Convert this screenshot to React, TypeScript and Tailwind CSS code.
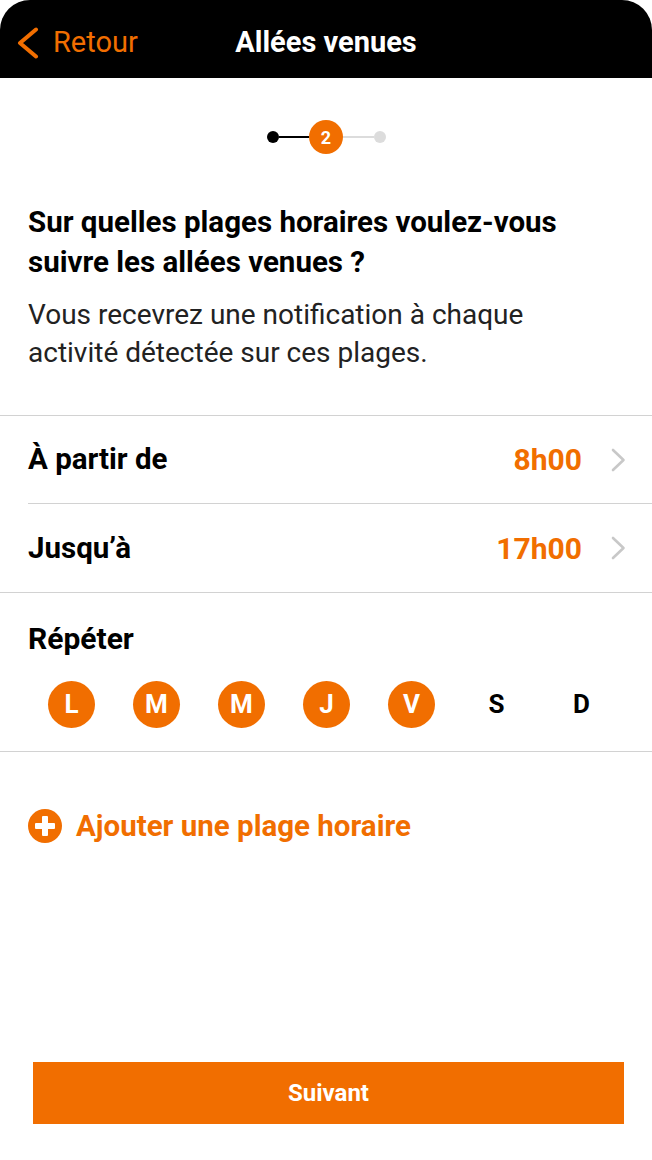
const days = [
  { label: 'L', on: true },
  { label: 'M', on: true },
  { label: 'M', on: true },
  { label: 'J', on: true },
  { label: 'V', on: true },
  { label: 'S', on: false },
  { label: 'D', on: false },
];

const TimeRow = ({ label, value, inset }: { label: string; value: string; inset?: boolean }) => (
  <div className={`flex h-[88px] items-center pr-[26px] ${inset ? 'ml-7 border-b border-[#d2d2d2]' : 'pl-7'}`}>
    <span className="flex-1 text-[29.5px] font-bold text-black">{label}</span>
    <span className="text-[30px] font-bold text-[#f16e00]">{value}</span>
    <svg className="ml-[29px]" width="15" height="24" viewBox="0 0 15 24">
      <polyline points="2,2 12.5,12 2,22" fill="none" stroke="#c8c8c8" strokeWidth="2.6" strokeLinecap="round" strokeLinejoin="round" />
    </svg>
  </div>
);

export default function App() {
  return (
    <div className="flex min-h-[1160px] w-[652px] flex-col bg-white" style={{ fontFamily: 'Roboto, "Liberation Sans", sans-serif' }}>
      {/* Header */}
      <div className="grid h-[78px] grid-cols-[1fr_auto_1fr] items-center rounded-t-[30px] bg-black pt-[8px]">
        <div className="flex items-center pl-[16px] text-[#f16e00]">
          <svg width="24" height="32" viewBox="0 0 24 32">
            <polyline points="20,2.5 4,16 20,29.5" fill="none" stroke="#f16e00" strokeWidth="4" strokeLinecap="round" strokeLinejoin="round" />
          </svg>
          <span className="ml-[13px] text-[29px]">Retour</span>
        </div>
        <div className="text-[29px] font-bold text-white">Allées venues</div>
        <div />
      </div>

      {/* Stepper */}
      <div className="mt-[42px] flex items-center justify-center pl-[1px]">
        <div className="h-3 w-3 rounded-full bg-black" />
        <div className="h-[2px] w-[30px] bg-black" />
        <div className="flex h-[34px] w-[34px] items-center justify-center rounded-full bg-[#f16e00] text-[18px] font-bold text-white">2</div>
        <div className="h-[2px] w-[31px] bg-[#dcdcdc]" />
        <div className="h-3 w-3 rounded-full bg-[#dcdcdc]" />
      </div>

      {/* Question */}
      <div className="px-7">
        <h1 className="mt-[48px] pr-[40px] text-[29.5px] font-bold leading-[40px] text-black">
          Sur quelles plages horaires voulez-vous suivre les allées venues ?
        </h1>
        <p className="mt-[14px] pr-6 text-[28px] leading-[38px] text-[#222]">
          Vous recevrez une notification à chaque activité détectée sur ces plages.
        </p>
      </div>

      {/* Time ranges */}
      <div className="mt-[43px] border-t border-[#d2d2d2]">
        <TimeRow label="À partir de" value="8h00" inset />
        <TimeRow label="Jusqu’à" value="17h00" />
      </div>

      {/* Repeat */}
      <div className="border-y border-[#d2d2d2] pb-[23px] pt-[30px]">
        <div className="px-7 text-[30px] font-bold leading-[32px] text-black">Répéter</div>
        <div className="mt-[26px] grid grid-cols-7 pl-[29px] pr-[28px]">
          {days.map((d, i) => (
            <div key={i} className="flex justify-center">
              <div
                className={`flex h-[47px] w-[47px] items-center justify-center rounded-full text-[26px] font-bold ${
                  d.on ? 'bg-[#f16e00] text-white' : 'text-black'
                }`}
              >
                {d.label}
              </div>
            </div>
          ))}
        </div>
      </div>

      {/* Add */}
      <div className="mt-[52px] flex items-center gap-[14px] px-7">
        <svg width="34" height="34" viewBox="0 0 34 34">
          <circle cx="17" cy="17" r="17" fill="#f16e00" />
          <rect x="14" y="7" width="6" height="20" rx="1" fill="white" />
          <rect x="7" y="14" width="20" height="6" rx="1" fill="white" />
        </svg>
        <span className="text-[29.5px] font-bold text-[#f16e00]">Ajouter une plage horaire</span>
      </div>

      <div className="flex-1" />

      {/* Next */}
      <div className="mb-[36px] pl-[33px] pr-[28px]">
        <button className="flex h-[62px] w-full items-center justify-center bg-[#f16e00] text-[24px] font-bold text-white">
          Suivant
        </button>
      </div>
    </div>
  );
}
